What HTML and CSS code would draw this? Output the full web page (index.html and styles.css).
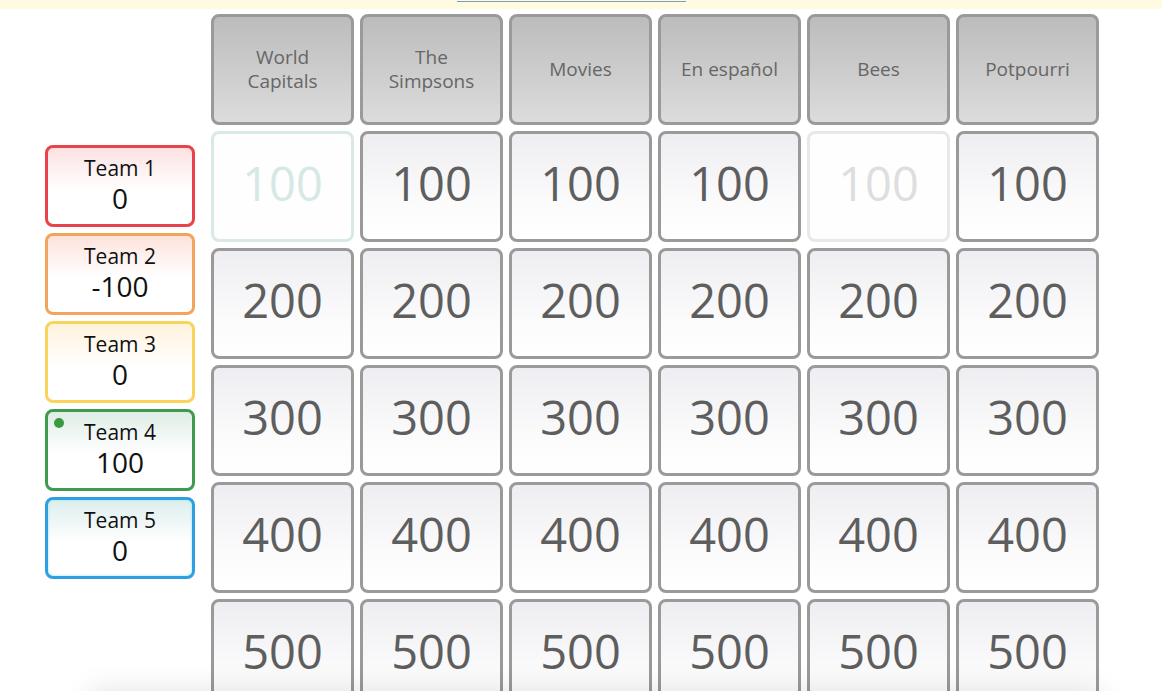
FILE: index.html
```html
<!DOCTYPE html>
<html lang="en">
<head>
    <meta charset="UTF-8">
    <title>Jeopardy</title>
    <link rel="stylesheet" href="styles.css">
</head>
<body>
    <div class="notice">
        <a class="notice-link" href="#"></a>
    </div>

    <div class="game">
        <div class="teams">
            <div class="team team-1">
                <div class="team-name">Team 1</div>
                <div class="team-score">0</div>
            </div>
            <div class="team team-2">
                <div class="team-name">Team 2</div>
                <div class="team-score">-100</div>
            </div>
            <div class="team team-3">
                <div class="team-name">Team 3</div>
                <div class="team-score">0</div>
            </div>
            <div class="team team-4 current">
                <span class="turn-dot"></span>
                <div class="team-name">Team 4</div>
                <div class="team-score">100</div>
            </div>
            <div class="team team-5">
                <div class="team-name">Team 5</div>
                <div class="team-score">0</div>
            </div>
        </div>

        <div class="board">
            <div class="category">World Capitals</div>
            <div class="category">The Simpsons</div>
            <div class="category">Movies</div>
            <div class="category">En español</div>
            <div class="category">Bees</div>
            <div class="category">Potpourri</div>

            <div class="clue used used-teal">100</div>
            <div class="clue">100</div>
            <div class="clue">100</div>
            <div class="clue">100</div>
            <div class="clue used">100</div>
            <div class="clue">100</div>

            <div class="clue">200</div>
            <div class="clue">200</div>
            <div class="clue">200</div>
            <div class="clue">200</div>
            <div class="clue">200</div>
            <div class="clue">200</div>

            <div class="clue">300</div>
            <div class="clue">300</div>
            <div class="clue">300</div>
            <div class="clue">300</div>
            <div class="clue">300</div>
            <div class="clue">300</div>

            <div class="clue">400</div>
            <div class="clue">400</div>
            <div class="clue">400</div>
            <div class="clue">400</div>
            <div class="clue">400</div>
            <div class="clue">400</div>

            <div class="clue">500</div>
            <div class="clue">500</div>
            <div class="clue">500</div>
            <div class="clue">500</div>
            <div class="clue">500</div>
            <div class="clue">500</div>
        </div>
    </div>

    <div class="bottom-shade"></div>
</body>
</html>
```

FILE: styles.css
```css
body {
    margin: 0;
    font-family: "Open Sans", "Noto Sans", sans-serif;
    background-color: #fff;
    overflow: hidden;
}
.notice {
    height: 9px;
    background-color: #fefbe1;
    padding-left: 457px;
}
.notice-link {
    display: block;
    width: 229px;
    height: 1px;
    border-bottom: 1px solid #7d9bbd;
}
.game {
    display: flex;
    align-items: flex-start;
    gap: 16px;
    padding: 5px 0 0 45px;
}
.teams {
    display: flex;
    flex-direction: column;
    gap: 6px;
    margin-top: 131px;
    width: 150px;
}
.team {
    position: relative;
    height: 82px;
    box-sizing: border-box;
    border: 3px solid #999;
    border-radius: 8px;
    text-align: center;
    color: #111;
    display: flex;
    flex-direction: column;
    justify-content: center;
    padding-bottom: 4px;
}
.team-name {
    font-size: 21px;
    line-height: 27px;
}
.team-score {
    font-size: 28px;
    line-height: 32px;
}
.team-1 {
    border-color: #e8424a;
    background: linear-gradient(#fde1e2, #fff 55%);
}
.team-2 {
    border-color: #f2a45c;
    background: linear-gradient(#fde3dc, #fff 55%);
}
.team-3 {
    border-color: #f9d45c;
    background: linear-gradient(#fef3dc, #fff 55%);
}
.team-4 {
    border-color: #3f9a4d;
    background: linear-gradient(#dfede6, #fff 55%);
}
.team-5 {
    border-color: #2f9fe2;
    background: linear-gradient(#ddeeed, #fff 55%);
    box-shadow: inset 0 0 3px #9fe0f5;
}
.turn-dot {
    position: absolute;
    top: 6px;
    left: 6px;
    width: 10px;
    height: 10px;
    border-radius: 50%;
    background-color: #3a9a3f;
}
.board {
    display: grid;
    grid-template-columns: repeat(6, 143px);
    grid-auto-rows: 111px;
    gap: 6px;
}
.category,
.clue {
    box-sizing: border-box;
    border: 3px solid #9a9a9a;
    border-radius: 8px;
    display: flex;
    align-items: center;
    justify-content: center;
    text-align: center;
}
.category {
    background: linear-gradient(#bcbcbc, #dcdcdc);
    color: #666;
    font-size: 19px;
    font-weight: 500;
    line-height: 24px;
    padding: 0 16px 2px;
}
.clue {
    background: linear-gradient(#eeedf1, #fbfbfc 65%, #fff);
    color: #5e5e5e;
    font-size: 47px;
    font-weight: 500;
    padding-bottom: 7px;
}
.clue.used {
    border-color: #e8e8e8;
    background: #fefefe;
    color: #dedede;
}
.clue.used-teal {
    border-color: #d9e9e6;
    color: #d6e8e5;
}
.bottom-shade {
    position: fixed;
    left: 90px;
    right: 60px;
    bottom: -40px;
    height: 40px;
    box-shadow: 0 0 30px rgba(0, 0, 0, 0.12);
}
```
